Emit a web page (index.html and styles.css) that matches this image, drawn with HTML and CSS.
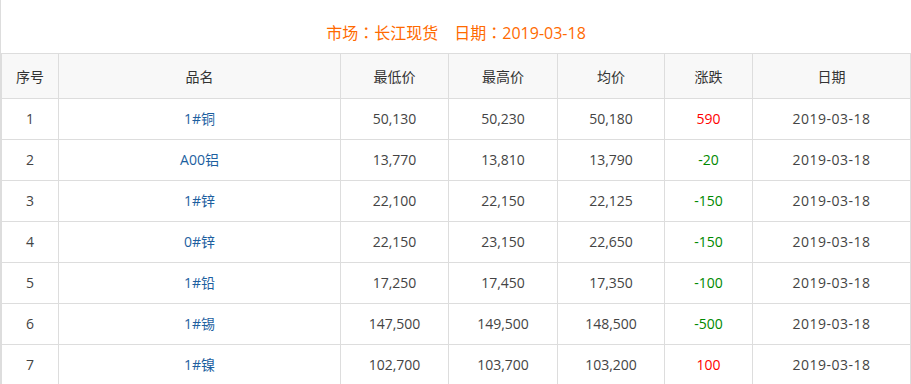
FILE: index.html
```html
<!DOCTYPE html>
<html lang="zh-CN">
<head>
<meta charset="utf-8">
<title>长江现货</title>
<link rel="stylesheet" href="styles.css">
</head>
<body>
<div class="wrap">
  <div class="title">市场<span class="colon" lang="zh-TW">：</span>长江现货<span class="date">日期<span class="colon" lang="zh-TW">：</span>2019-03-18</span></div>
  <table class="price">
    <colgroup>
      <col class="c-no"><col class="c-name"><col class="c-low"><col class="c-high"><col class="c-avg"><col class="c-chg"><col class="c-date">
    </colgroup>
    <thead>
      <tr><th>序号</th><th>品名</th><th>最低价</th><th>最高价</th><th>均价</th><th>涨跌</th><th>日期</th></tr>
    </thead>
    <tbody>
      <tr><td>1</td><td class="name">1#铜</td><td>50,130</td><td>50,230</td><td>50,180</td><td class="up">590</td><td class="day">2019-03-18</td></tr>
      <tr><td>2</td><td class="name">A00铝</td><td>13,770</td><td>13,810</td><td>13,790</td><td class="down">-20</td><td class="day">2019-03-18</td></tr>
      <tr><td>3</td><td class="name">1#锌</td><td>22,100</td><td>22,150</td><td>22,125</td><td class="down">-150</td><td class="day">2019-03-18</td></tr>
      <tr><td>4</td><td class="name">0#锌</td><td>22,150</td><td>23,150</td><td>22,650</td><td class="down">-150</td><td class="day">2019-03-18</td></tr>
      <tr><td>5</td><td class="name">1#铅</td><td>17,250</td><td>17,450</td><td>17,350</td><td class="down">-100</td><td class="day">2019-03-18</td></tr>
      <tr><td>6</td><td class="name">1#锡</td><td>147,500</td><td>149,500</td><td>148,500</td><td class="down">-500</td><td class="day">2019-03-18</td></tr>
      <tr><td>7</td><td class="name">1#镍</td><td>102,700</td><td>103,700</td><td>103,200</td><td class="up">100</td><td class="day">2019-03-18</td></tr>
    </tbody>
  </table>
</div>
</body>
</html>
```

FILE: styles.css
```css
html, body {
  margin: 0;
  padding: 0;
  background: #fff;
}
body {
  font-family: "Open Sans", "Noto Sans CJK SC", sans-serif;
  color: #444;
}
.wrap {
  width: 911px;
  border-left: 1px solid #ddd;
  box-sizing: border-box;
}
.title {
  height: 53px;
  box-sizing: border-box;
  padding-top: 20px;
  line-height: 24px;
  font-size: 16px;
  color: #ff6a00;
  text-align: center;
}
.title .colon {
  font-family: "Noto Sans CJK TC", sans-serif;
}
.title .date {
  margin-left: 16px;
}
.price {
  border-collapse: collapse;
  width: 910px;
  table-layout: fixed;
  font-size: 14px;
}
.price th, .price td {
  border: 1px solid #ddd;
  text-align: center;
  padding: 0;
  font-weight: normal;
}
.price th {
  background: #f8f8f8;
  height: 43px;
  padding-bottom: 1px;
  color: #333;
}
.price td {
  height: 38px;
  padding-bottom: 2px;
}
.price td.day {
  letter-spacing: 0.5px;
}
.c-no { width: 57px; }
.c-name { width: 282px; }
.c-low { width: 108px; }
.c-high { width: 109px; }
.c-avg { width: 107px; }
.c-chg { width: 88px; }
.c-date { width: 158px; }
.price td.name { color: #1d5f9f; }
.price td.up { color: #f00; }
.price td.down { color: #080; }
```
